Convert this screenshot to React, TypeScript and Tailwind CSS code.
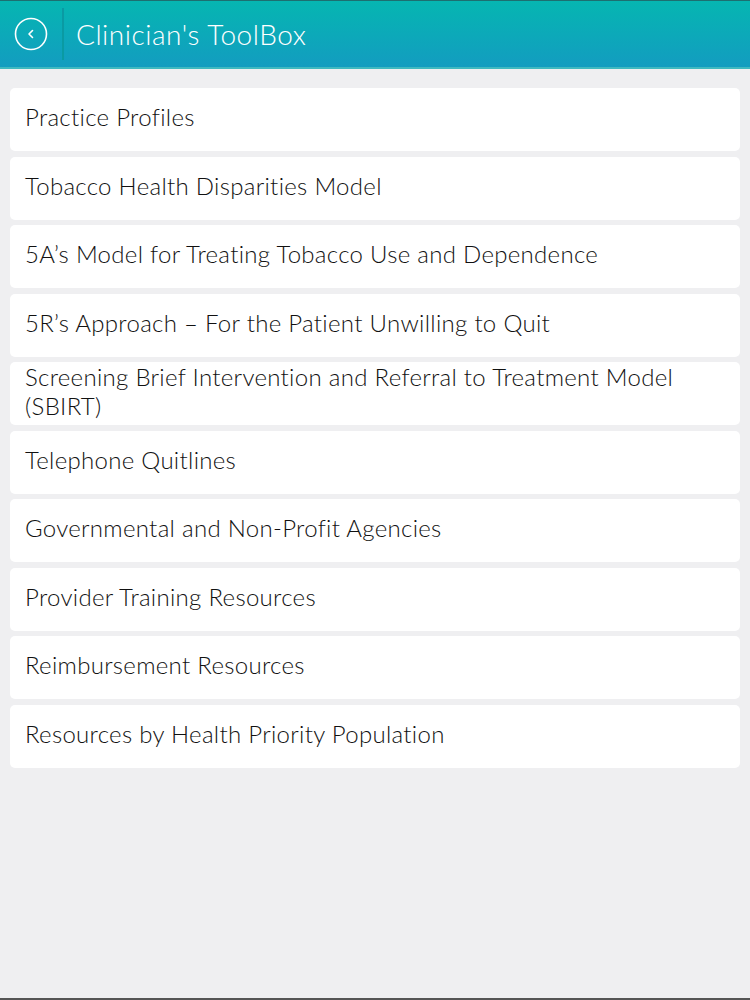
const items = [
  'Practice Profiles',
  'Tobacco Health Disparities Model',
  '5A’s Model for Treating Tobacco Use and Dependence',
  '5R’s Approach – For the Patient Unwilling to Quit',
  'Screening Brief Intervention and Referral to Treatment Model (SBIRT)',
  'Telephone Quitlines',
  'Governmental and Non-Profit Agencies',
  'Provider Training Resources',
  'Reimbursement Resources',
  'Resources by Health Priority Population',
]

export default function App() {
  return (
    <div className="w-[750px] h-[1000px] bg-[#efeff1] flex flex-col overflow-hidden" style={{ fontFamily: 'Lato, "Open Sans", sans-serif' }}>
      {/* Header */}
      <div className="h-[69px] shrink-0 border-t border-[#1d6f70] border-b-2 border-b-[#3fb9c0] bg-gradient-to-b from-[#06b6b1] to-[#139cc0] flex items-center">
        <button className="w-[62px] h-full flex items-center justify-center">
          <svg width="34" height="34" viewBox="0 0 34 34" fill="none" stroke="white" strokeWidth="1.6">
            <circle cx="17" cy="17" r="15.5" />
            <path d="M18.5 13.5 L15 17 L18.5 20.5" strokeLinecap="round" strokeLinejoin="round" />
          </svg>
        </button>
        <div className="w-[2px] h-[52px] bg-[#0a9aa3]" />
        <h1 className="ml-[12px] text-white text-[28px] font-light tracking-[0.5px]">Clinician's ToolBox</h1>
      </div>

      {/* List */}
      <div className="flex flex-col gap-[5.5px] px-[10px] pt-[19px]">
        {items.map(t => (
          <div key={t} className="h-[63px] bg-white rounded-[5px] flex items-center pl-[15px] pr-[40px] pb-[6px] text-[24px] leading-[29px] font-light tracking-[0.3px] text-[#111]">
            {t}
          </div>
        ))}
      </div>

      <div className="mt-auto h-[2px] bg-[#555]" />
    </div>
  )
}
